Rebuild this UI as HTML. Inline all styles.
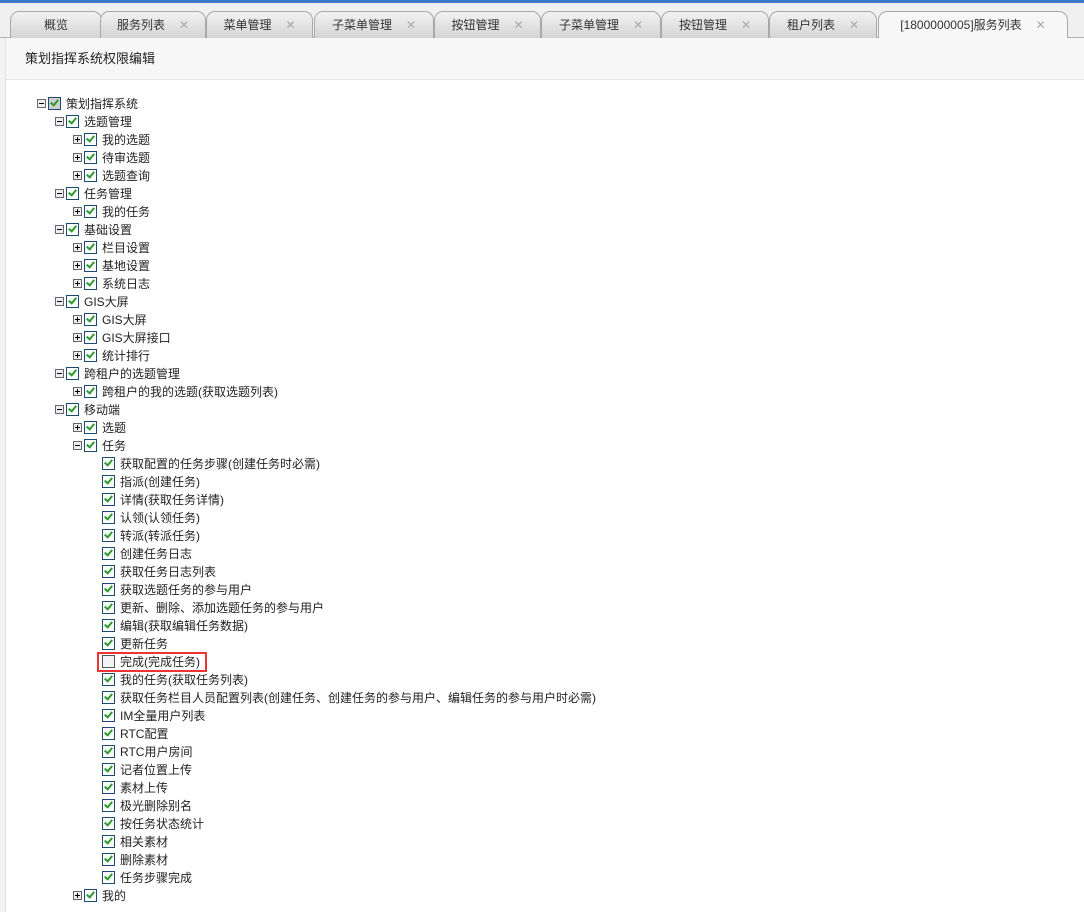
<!DOCTYPE html>
<html><head><meta charset="utf-8"><style>
body{margin:0;width:1084px;height:912px;position:relative;overflow:hidden;background:#fff;font-family:"Liberation Sans","Noto Sans CJK SC",sans-serif;font-size:12px;color:#222}
.top{position:absolute;left:0;top:0;width:1084px;height:3px;background:#3b78c8}
.tabbar{position:absolute;left:0;top:3px;width:1084px;height:34px;background:#f0f0f0;border-bottom:1px solid #b0b0b0}
.tab{position:absolute;top:8px;height:26px;line-height:27px;text-align:center;background:linear-gradient(#f2f2f2,#d4d4d4);border:1px solid #a8a8a8;border-bottom:none;border-radius:9px 9px 0 0;font-size:12px;color:#333}
.tab.act{background:#f7f7f7;height:27px}
.x{color:#aaa;margin-left:14px;font-weight:normal}
.hdr{position:absolute;left:6px;top:38px;width:1078px;height:41px;background:#f7f7f7;border-bottom:1px solid #e6e6e6;font-size:13px;line-height:42px}
.hdr span{margin-left:19px}
.lp{position:absolute;left:0;top:38px;width:5px;height:874px;background:#f3f3f3;border-right:1px solid #e0e0e0}
.r{position:absolute;height:18px;line-height:18px;white-space:nowrap;margin-top:1px}
.e{display:inline-block;width:7px;height:7px;border:1px solid #667;background:#eee;position:relative;vertical-align:middle;margin-right:2px;top:-1px}
.e:before{content:"";position:absolute;left:1px;top:3px;width:5px;height:1px;background:#000}
.e.p:after{content:"";position:absolute;left:3px;top:1px;width:1px;height:5px;background:#000}
.c{display:inline-block;width:11px;height:11px;border:1px solid #1c4a72;background:#fff;position:relative;vertical-align:middle;margin-right:5px;top:-1px}
.c.g{background:#cfcfcf}
.c:after{content:"";position:absolute;left:3px;top:0px;width:3px;height:6px;border:solid #2a9a2a;border-width:0 2px 2px 0;transform:rotate(40deg)}
.c.n:after{display:none}
.c.n{background:#f4f4f4;border-color:#555}
.l0{left:37px}.l1{left:55px}.l2{left:73px}.l3{left:102px}
.red{position:absolute;left:97px;top:652px;width:106px;height:16px;border:2px solid #e33}
</style></head><body>
<div class="top"></div>
<div class="tabbar">
<div class="tab" style="left:10px;width:90px">概览</div>
<div class="tab" style="left:100px;width:104px">服务列表<b class="x">✕</b></div>
<div class="tab" style="left:206px;width:105px">菜单管理<b class="x">✕</b></div>
<div class="tab" style="left:314px;width:118px">子菜单管理<b class="x">✕</b></div>
<div class="tab" style="left:434px;width:105px">按钮管理<b class="x">✕</b></div>
<div class="tab" style="left:541px;width:118px">子菜单管理<b class="x">✕</b></div>
<div class="tab" style="left:661px;width:106px">按钮管理<b class="x">✕</b></div>
<div class="tab" style="left:769px;width:106px">租户列表<b class="x">✕</b></div>
<div class="tab act" style="left:878px;width:188px">[1800000005]服务列表<b class="x">✕</b></div>
</div>
<div class="lp"></div>
<div class="hdr"><span>策划指挥系统权限编辑</span></div>

<div class="r l0" style="top:94px"><i class="e"></i><i class="c g"></i>策划指挥系统</div>
<div class="r l1" style="top:112px"><i class="e"></i><i class="c"></i>选题管理</div>
<div class="r l2" style="top:130px"><i class="e p"></i><i class="c"></i>我的选题</div>
<div class="r l2" style="top:148px"><i class="e p"></i><i class="c"></i>待审选题</div>
<div class="r l2" style="top:166px"><i class="e p"></i><i class="c"></i>选题查询</div>
<div class="r l1" style="top:184px"><i class="e"></i><i class="c"></i>任务管理</div>
<div class="r l2" style="top:202px"><i class="e p"></i><i class="c"></i>我的任务</div>
<div class="r l1" style="top:220px"><i class="e"></i><i class="c"></i>基础设置</div>
<div class="r l2" style="top:238px"><i class="e p"></i><i class="c"></i>栏目设置</div>
<div class="r l2" style="top:256px"><i class="e p"></i><i class="c"></i>基地设置</div>
<div class="r l2" style="top:274px"><i class="e p"></i><i class="c"></i>系统日志</div>
<div class="r l1" style="top:292px"><i class="e"></i><i class="c"></i>GIS大屏</div>
<div class="r l2" style="top:310px"><i class="e p"></i><i class="c"></i>GIS大屏</div>
<div class="r l2" style="top:328px"><i class="e p"></i><i class="c"></i>GIS大屏接口</div>
<div class="r l2" style="top:346px"><i class="e p"></i><i class="c"></i>统计排行</div>
<div class="r l1" style="top:364px"><i class="e"></i><i class="c"></i>跨租户的选题管理</div>
<div class="r l2" style="top:382px"><i class="e p"></i><i class="c"></i>跨租户的我的选题(获取选题列表)</div>
<div class="r l1" style="top:400px"><i class="e"></i><i class="c"></i>移动端</div>
<div class="r l2" style="top:418px"><i class="e p"></i><i class="c"></i>选题</div>
<div class="r l2" style="top:436px"><i class="e"></i><i class="c"></i>任务</div>
<div class="r l3" style="top:454px"><i class="c"></i>获取配置的任务步骤(创建任务时必需)</div>
<div class="r l3" style="top:472px"><i class="c"></i>指派(创建任务)</div>
<div class="r l3" style="top:490px"><i class="c"></i>详情(获取任务详情)</div>
<div class="r l3" style="top:508px"><i class="c"></i>认领(认领任务)</div>
<div class="r l3" style="top:526px"><i class="c"></i>转派(转派任务)</div>
<div class="r l3" style="top:544px"><i class="c"></i>创建任务日志</div>
<div class="r l3" style="top:562px"><i class="c"></i>获取任务日志列表</div>
<div class="r l3" style="top:580px"><i class="c"></i>获取选题任务的参与用户</div>
<div class="r l3" style="top:598px"><i class="c"></i>更新、删除、添加选题任务的参与用户</div>
<div class="r l3" style="top:616px"><i class="c"></i>编辑(获取编辑任务数据)</div>
<div class="r l3" style="top:634px"><i class="c"></i>更新任务</div>
<div class="r l3" style="top:652px"><i class="c n"></i>完成(完成任务)</div>
<div class="red"></div>
<div class="r l3" style="top:670px"><i class="c"></i>我的任务(获取任务列表)</div>
<div class="r l3" style="top:688px"><i class="c"></i>获取任务栏目人员配置列表(创建任务、创建任务的参与用户、编辑任务的参与用户时必需)</div>
<div class="r l3" style="top:706px"><i class="c"></i>IM全量用户列表</div>
<div class="r l3" style="top:724px"><i class="c"></i>RTC配置</div>
<div class="r l3" style="top:742px"><i class="c"></i>RTC用户房间</div>
<div class="r l3" style="top:760px"><i class="c"></i>记者位置上传</div>
<div class="r l3" style="top:778px"><i class="c"></i>素材上传</div>
<div class="r l3" style="top:796px"><i class="c"></i>极光删除别名</div>
<div class="r l3" style="top:814px"><i class="c"></i>按任务状态统计</div>
<div class="r l3" style="top:832px"><i class="c"></i>相关素材</div>
<div class="r l3" style="top:850px"><i class="c"></i>删除素材</div>
<div class="r l3" style="top:868px"><i class="c"></i>任务步骤完成</div>
<div class="r l2" style="top:886px"><i class="e p"></i><i class="c"></i>我的</div>
</body></html>
